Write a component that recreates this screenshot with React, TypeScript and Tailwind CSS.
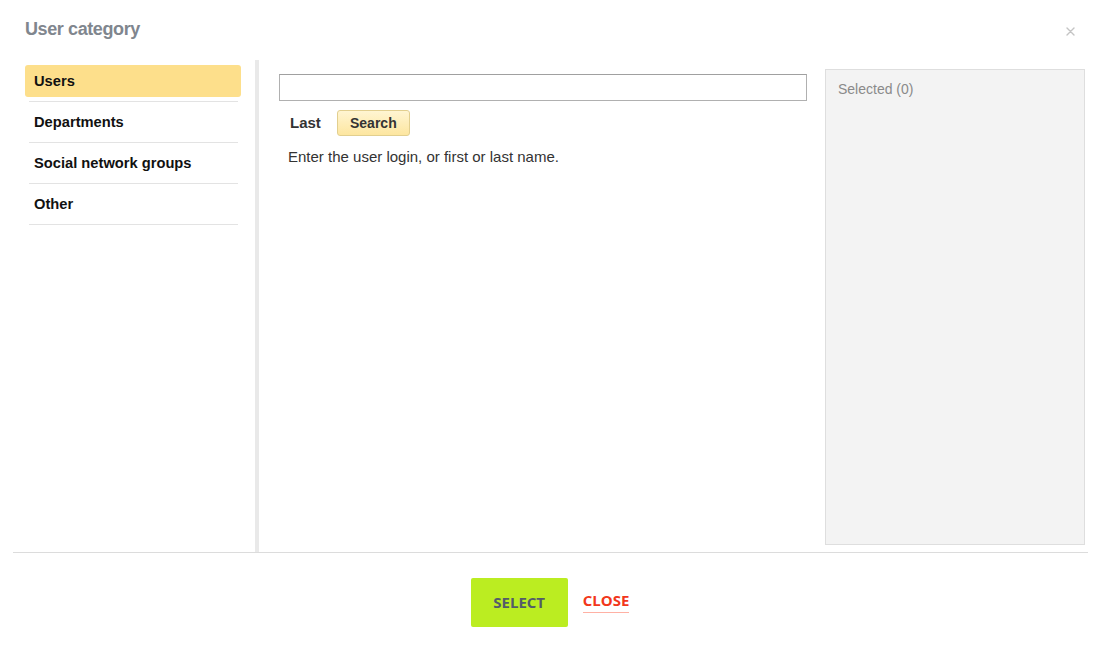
import React from "react";

const CATEGORIES = ["Users", "Departments", "Social network groups", "Other"];

function CloseIcon() {
  return (
    <svg width="9" height="9" viewBox="0 0 9 9" className="block">
      <path d="M1 1 L8 8 M8 1 L1 8" stroke="#c4c4c4" strokeWidth="1.4" strokeLinecap="round" />
    </svg>
  );
}

export default function App() {
  return (
    <div className="relative flex h-[652px] w-[1097px] flex-col bg-white font-['Liberation_Sans',Arial,sans-serif] text-[#333]">
      <div className="flex h-[60px] items-start justify-between pl-[25px] pr-[22px] pt-[16px]">
        <h2 className="text-[18px] font-bold tracking-[-0.4px] text-[#80868e]">User category</h2>
        <button className="mt-[11px] p-0">
          <CloseIcon />
        </button>
      </div>

      <div className="ml-[13px] mr-[9px] flex h-[493px] border-b border-[#dcdcdc]">
        <nav className="ml-[12px] w-[216px] pt-[1px]">
          {CATEGORIES.map((label, i) => (
            <div key={label} className="ml-[4px] mr-[3px] border-b border-[#e3e3e3] py-[4px]">
              <div
                className={`-ml-[4px] -mr-[3px] flex h-[32px] items-center rounded-[3px] pl-[9px] text-[14.7px] font-bold text-[#111] ${
                  i === 0 ? "bg-[#fddf8b]" : ""
                }`}
              >
                {label}
              </div>
            </div>
          ))}
        </nav>

        <div className="ml-[14px] w-[4px] bg-[#e9e9e9]" />

        <div className="box-content w-[528px] pl-[20px] pt-[14px]">
          <input
            className="block h-[27px] w-[528px] border border-[#b0b0b0] border-t-[#a0a0a0] bg-white outline-none"
            type="text"
          />
          <div className="mt-[9px] flex items-center">
            <span className="pl-[11px] text-[15px] font-bold text-[#333]">Last</span>
            <button className="ml-[16px] flex h-[26px] w-[73px] items-center justify-center rounded-[3px] border border-[#e2cf8f] bg-[linear-gradient(#fff5d2,#fde6a0)] text-[14px] font-bold text-[#333]">
              Search
            </button>
          </div>
          <p className="mt-[10px] pl-[9px] text-[15px] text-[#333]">Enter the user login, or first or last name.</p>
        </div>

        <div className="ml-[18px] mt-[9px] h-[476px] w-[260px] border border-[#dedede] bg-[#f3f3f3] px-[12px] pt-[7px]">
          <span className="text-[14px] text-[#8a8a8a]">Selected (0)</span>
        </div>
      </div>

      <div className="flex flex-1 items-start justify-center pt-[25px] font-['Open_Sans',sans-serif]">
        <button className="ml-[3px] flex h-[49px] w-[97px] items-center justify-center rounded-[2px] bg-[#bbed21] text-[15px] font-bold uppercase text-[#535c69]">
          Select
        </button>
        <button className="ml-[15px] mt-[14px] border-b border-[#ffb1a4] pb-[3px] text-[15px] font-bold uppercase leading-[17px] text-[#f2371b]">
          Close
        </button>
      </div>
    </div>
  );
}
